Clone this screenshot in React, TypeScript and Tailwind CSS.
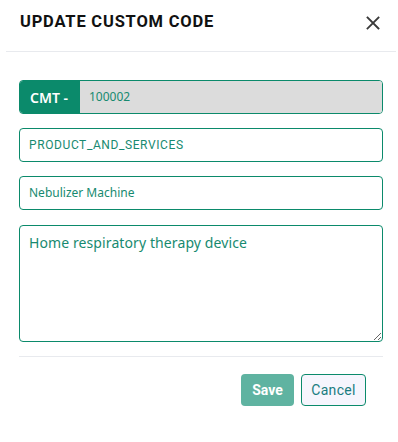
import React from "react";

export default function App() {
  return (
    <div className="w-[398px] h-[442px] bg-white" style={{ fontFamily: "Inter, 'Noto Sans', sans-serif" }}>
      <div className="ml-[6px] mr-[2px] h-[52px] border-b border-[#e8eaee] flex items-center justify-between pl-[14px] pr-[15px]">
        <h1 className="text-[16.5px] font-bold tracking-[0.8px] text-[#111111] font-['Roboto'] leading-none mt-[-6px]">UPDATE CUSTOM CODE</h1>
        <button className="w-[16px] h-[16px] flex items-center justify-center text-[#333] mt-[-6px]">
          <svg width="14" height="14" viewBox="0 0 14 14" fill="none" stroke="#3a3a3a" strokeWidth="1.8" strokeLinecap="square">
            <path d="M1.5 1.5 L12.5 12.5 M12.5 1.5 L1.5 12.5" />
          </svg>
        </button>
      </div>
      <div className="pl-[19px] pr-[15px] pt-[28px] flex flex-col">
        <div className="h-[34px] flex rounded-[4px] border border-[#0b8a6b] overflow-hidden">
          <div className="w-[60px] bg-[#0b8a6b] text-white text-[14px] font-semibold flex items-center justify-center font-['Noto_Sans'] pr-[2px]">CMT -</div>
          <div className="flex-1 bg-[#dcdcdc] text-[12px] text-[#178a70] flex items-center pl-[9px] font-['Noto_Sans']">100002</div>
        </div>
        <div className="mt-[14px] h-[34px] rounded-[4px] border border-[#0b8a6b] flex items-center pl-[9px] text-[12px] text-[#178a70] tracking-[0.6px] font-['Roboto']">PRODUCT_AND_SERVICES</div>
        <div className="mt-[14px] h-[34px] rounded-[4px] border border-[#0b8a6b] flex items-center pl-[9px] text-[12px] text-[#178a70] font-['Noto_Sans']">Nebulizer Machine</div>
        <textarea
          readOnly
          value="Home respiratory therapy device"
          className="mt-[15px] h-[117px] rounded-[4px] border border-[#0b8a6b] pl-[9px] pt-[6px] text-[14px] tracking-[0.1px] text-[#178a70] font-['Noto_Sans'] outline-none resize-y"
        />
        <div className="mt-[14px] border-t border-[#e8eaee]" />
        <div className="mt-[17px] flex justify-end gap-[7px] pr-[17px]">
          <button className="w-[53px] h-[32px] rounded-[4px] bg-[#5fb3a1] text-white text-[14px] font-bold font-['Roboto']">Save</button>
          <button className="w-[65px] h-[32px] rounded-[4px] border border-[#0b8a6b] bg-[#f6f5fd] text-[#1a7c80] text-[14px] font-['Roboto'] tracking-[0.3px]">Cancel</button>
        </div>
      </div>
    </div>
  );
}
